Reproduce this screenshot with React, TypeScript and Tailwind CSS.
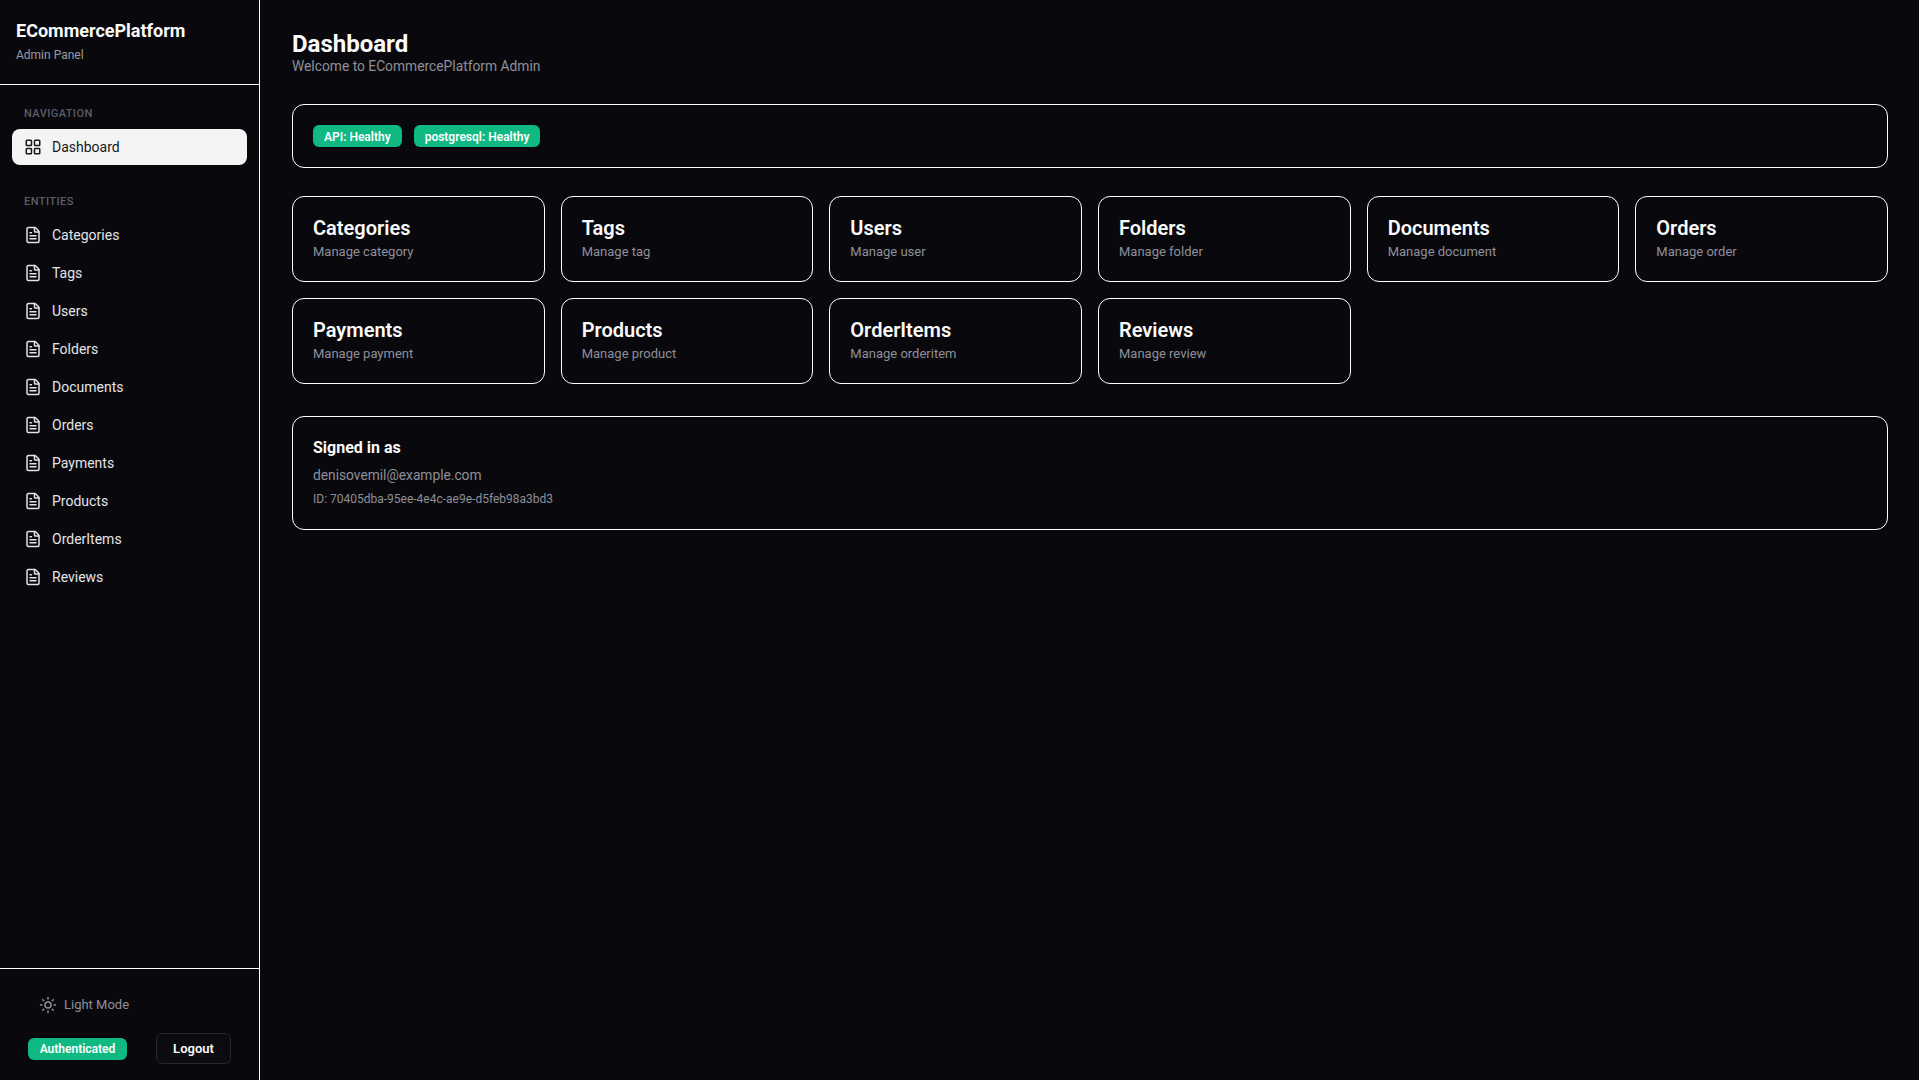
import { FileText, LayoutGrid, Sun } from "lucide-react";

const entities = ["Categories", "Tags", "Users", "Folders", "Documents", "Orders", "Payments", "Products", "OrderItems", "Reviews"];
const cards = [
  ["Categories", "Manage category"],
  ["Tags", "Manage tag"],
  ["Users", "Manage user"],
  ["Folders", "Manage folder"],
  ["Documents", "Manage document"],
  ["Orders", "Manage order"],
  ["Payments", "Manage payment"],
  ["Products", "Manage product"],
  ["OrderItems", "Manage orderitem"],
  ["Reviews", "Manage review"],
];

function Badge({ children }: { children: React.ReactNode }) {
  return (
    <span className="inline-flex h-[22px] items-center rounded-md bg-[#10b981] px-[11px] pt-px text-xs font-semibold text-white">
      {children}
    </span>
  );
}

export default function App() {
  return (
    <div className="flex h-[1080px] w-full overflow-hidden bg-[#09090d] font-['Roboto','Noto_Sans',sans-serif] text-[#fafafa]">
      <aside className="flex h-full w-[260px] shrink-0 flex-col border-r border-white">
        <div className="h-[85px] border-b border-white px-4 pt-[19px]">
          <div className="text-lg leading-[24px] font-bold">ECommercePlatform</div>
          <div className="mt-[4px] text-xs leading-4 text-[#9a9aa5]">Admin Panel</div>
        </div>
        <nav className="flex-1 px-3 pt-[21px]">
          <div className="px-3 text-[11px] leading-4 font-medium tracking-[0.04em] text-[#5c5c66]">NAVIGATION</div>
          <div className="mt-[7px] flex h-9 items-center gap-2.5 rounded-lg bg-[#f4f4f5] px-3 text-sm text-[#18181b]">
            <LayoutGrid size={18} />
            <span>Dashboard</span>
          </div>
          <div className="mt-[29px] px-3 text-[11px] leading-4 font-medium tracking-[0.04em] text-[#5c5c66]">ENTITIES</div>
          <div className="mt-[7px] flex flex-col gap-0.5">
            {entities.map((e) => (
              <div key={e} className="flex h-9 items-center gap-2.5 rounded-lg px-3 text-sm text-[#e4e4e7]">
                <FileText size={18} />
                <span>{e}</span>
              </div>
            ))}
          </div>
        </nav>
        <div className="h-[112px] border-t border-white px-7 pt-[24px]">
          <div className="flex h-6 items-center gap-[7px] pl-[11px] text-[13px] text-[#8f8f9a]">
            <Sun size={18} />
            <span>Light Mode</span>
          </div>
          <div className="mt-[16px] flex items-center justify-between">
            <span className="inline-flex h-[22px] w-[99px] items-center justify-center rounded-md bg-[#10b981] text-xs font-semibold text-white">
              Authenticated
            </span>
            <button className="h-[31px] w-[75px] rounded-md border border-[#27272a] bg-[#0c0c10] text-[13px] font-semibold text-[#fafafa]">
              Logout
            </button>
          </div>
        </div>
      </aside>
      <main className="flex-1 px-[32px] pt-[29px] pr-[31px]">
        <h1 className="text-2xl leading-[30px] font-bold">Dashboard</h1>
        <p className="-mt-[2px] text-[13.8px] leading-[18px] text-[#8f8f9a]">Welcome to ECommercePlatform Admin</p>
        <section className="mt-[29px] flex h-16 items-center gap-3 rounded-xl border border-white px-5">
          <Badge>API: Healthy</Badge>
          <Badge>postgresql: Healthy</Badge>
        </section>
        <section className="mt-7 grid grid-cols-6 gap-4">
          {cards.map(([t, s]) => (
            <div key={t} className="h-[86px] rounded-xl border border-white px-5 pt-[18px]">
              <div className="text-xl leading-[26px] font-semibold">{t}</div>
              <div className="mt-[2px] text-[13px] leading-[18px] text-[#8f8f9a]">{s}</div>
            </div>
          ))}
        </section>
        <section className="mt-8 h-[114px] rounded-xl border border-white px-5 pt-[20px]">
          <div className="text-base leading-[22px] font-bold">Signed in as</div>
          <div className="mt-[6px] text-[13.75px] leading-5 text-[#8f8f9a]">denisovemil@example.com</div>
          <div className="mt-[6px] text-xs leading-4 text-[#8f8f9a]">ID: 70405dba-95ee-4e4c-ae9e-d5feb98a3bd3</div>
        </section>
      </main>
    </div>
  );
}
